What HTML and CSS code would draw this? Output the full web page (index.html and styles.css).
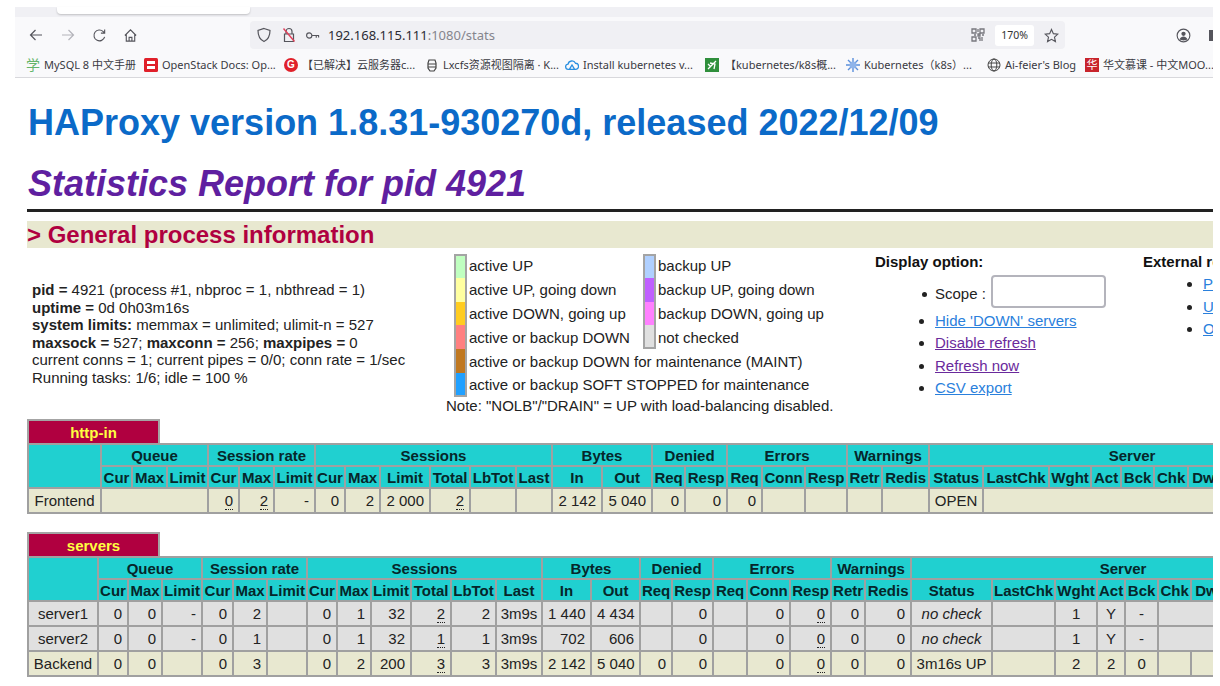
FILE: index.html
```html
<!DOCTYPE html>
<html lang="en">
<head>
<meta charset="utf-8">
<title>Statistics Report for HAProxy</title>
<link rel="stylesheet" href="styles.css">
</head>
<body>
<div class="shot">
  <div class="tabstrip"><div class="tab"></div></div>
  <div class="toolbar">
    <svg class="ic ic-back" viewBox="0 0 16 16"><path d="M14 8H2.500M7.500 3 2.500 8l5 5"/></svg>
    <svg class="ic ic-fwd" viewBox="0 0 16 16"><path d="M2 8h11.500M8.500 3l5 5-5 5"/></svg>
    <svg class="ic ic-reload" viewBox="0 0 16 16"><path d="M13.500 9.500A5.800 5.800 0 1 1 12 3.800L13.500 5.500M13.500 1.500v4h-4"/></svg>
    <svg class="ic ic-home" viewBox="0 0 16 16"><path d="M2 8 8 2l6 6M3.500 7v7h9V7M6.500 14v-4h3v4"/></svg>
    <div class="urlbar">
      <svg class="ic ic-shield" viewBox="0 0 16 16"><path d="M8 1.500 14 3.500c0 6-1.500 9-6 11-4.500-2-6-5-6-11z"/></svg>
      <svg class="ic ic-lock" viewBox="0 0 16 16"><path d="M5 7V4.500a3 3 0 0 1 6 0V7M3.500 7h9v7.500h-9z"/><path class="strike" d="M2.500 1.500l11 13"/></svg>
      <svg class="ic ic-key" viewBox="0 0 16 16"><circle cx="4.500" cy="8" r="2.800"/><path d="M7.500 8H15M12 8v2.500M14.500 8v2"/></svg>
      <span class="url">192.168.115.111<span class="url-rest">:1080/stats</span></span>
      <svg class="ic ic-qr" viewBox="0 0 14 14"><path d="M1 1h4v4H1zM9 1h4v4H9zM1 9h4v4H1zM7 1v3M7 6h2v2H7zM11 7h2M7 10h2v3M11 9v4M3 7h2"/></svg>
      <span class="zoom-chip">170%</span>
      <svg class="ic ic-star" viewBox="0 0 16 16"><path d="M8 1.500l2 4.500 4.800.5-3.600 3.200 1 4.800L8 12.100l-4.200 2.400 1-4.800L1.200 6.500 6 6z"/></svg>
    </div>
    <svg class="ic ic-account" viewBox="0 0 16 16"><circle cx="8" cy="8" r="6.800"/><circle class="solid" cx="8" cy="6.200" r="2.300"/><path class="solid" d="M3.800 12c1-2.200 2.500-3 4.200-3s3.200.8 4.200 3c-2.200 1.700-6.200 1.700-8.400 0z"/></svg>
    <span class="menu-edge"></span>
  </div>
  <div class="bookmarks">
    <div class="bm"><span class="fav fav-xue">学</span><span class="bm-text">MySQL 8 中文手册</span></div>
    <div class="bm"><svg class="fav" viewBox="0 0 14 14"><rect width="14" height="14" rx="1.500" fill="#e0202a"/><rect x="3" y="3" width="8" height="3" fill="#fff"/><rect x="3" y="8" width="8" height="3" fill="#fff"/></svg><span class="bm-text">OpenStack Docs: Op...</span></div>
    <div class="bm"><span class="fav fav-g">G</span><span class="bm-text">【已解决】云服务器c...</span></div>
    <div class="bm"><svg class="fav" viewBox="0 0 14 14"><path d="M4 2h6l1 3v5l-2 3H5l-2-3V5zM3 6h8M3 9h8" fill="none" stroke="#444" stroke-width="1.200"/></svg><span class="bm-text">Lxcfs资源视图隔离 · K...</span></div>
    <div class="bm"><svg class="fav" viewBox="0 0 16 14"><path d="M4 12a3 3 0 0 1-.5-6A4.500 4.500 0 0 1 12 5a3.500 3.500 0 0 1 0 7zM5 12l3-5 3 5" fill="none" stroke="#2a8fe0" stroke-width="1.500"/></svg><span class="bm-text">Install kubernetes v...</span></div>
    <div class="bm"><svg class="fav" viewBox="0 0 14 14"><rect width="14" height="14" fill="#2f8f3c"/><path d="M3 11 11 3M5 5l5 1-1 5M3 6l3 3" fill="none" stroke="#fff" stroke-width="1.300"/></svg><span class="bm-text bm-gap">【kubernetes/k8s概...</span></div>
    <div class="bm"><svg class="fav" viewBox="0 0 14 14"><path d="M7 0v14M0 7h14M2 2l10 10M12 2 2 12" stroke="#5a8fdc" stroke-width="1.400"/><circle cx="7" cy="7" r="3.500" fill="#8fb4ea"/></svg><span class="bm-text">Kubernetes（k8s）...</span></div>
    <div class="bm"><svg class="fav" viewBox="0 0 14 14"><circle cx="7" cy="7" r="6" fill="none" stroke="#444"/><ellipse cx="7" cy="7" rx="2.800" ry="6" fill="none" stroke="#444"/><path d="M1 5h12M1 9h12" stroke="#444"/></svg><span class="bm-text">Ai-feier's Blog</span></div>
    <div class="bm"><span class="fav fav-hua">华</span><span class="bm-text">华文慕课 - 中文MOO...</span></div>
  </div>

  <main class="page">
    <h1 class="title">HAProxy version 1.8.31-930270d, released 2022/12/09</h1>
    <h2 class="subtitle">Statistics Report for pid 4921</h2>
    <hr class="rule">
    <h3 class="band">&gt; General process information</h3>

    <section class="info">
      <p class="proc">
        <b>pid = </b>4921 (process #1, nbproc = 1, nbthread = 1)<br>
        <b>uptime = </b>0d 0h03m16s<br>
        <b>system limits:</b> memmax = unlimited; ulimit-n = 527<br>
        <b>maxsock = </b>527; <b>maxconn = </b>256; <b>maxpipes = </b>0<br>
        current conns = 1; current pipes = 0/0; conn rate = 1/sec<br>
        Running tasks: 1/6; idle = 100 %
      </p>
      <div class="legend">
        <span class="sw top c-up"></span><span class="lab">active UP</span>
        <span class="sw alt top c-bup"></span><span class="lab">backup UP</span>
        <span class="sw c-upd"></span><span class="lab">active UP, going down</span>
        <span class="sw alt c-bupd"></span><span class="lab">backup UP, going down</span>
        <span class="sw c-dnu"></span><span class="lab">active DOWN, going up</span>
        <span class="sw alt c-bdnu"></span><span class="lab">backup DOWN, going up</span>
        <span class="sw c-dn"></span><span class="lab">active or backup DOWN</span>
        <span class="sw alt end c-nc"></span><span class="lab">not checked</span>
        <span class="sw c-mnt"></span><span class="lab lab-wide">active or backup DOWN for maintenance (MAINT)</span>
        <span class="sw end c-soft"></span><span class="lab lab-wide">active or backup SOFT STOPPED for maintenance</span>
        <span class="note">Note: "NOLB"/"DRAIN" = UP with load-balancing disabled.</span>
      </div>
      <div class="opts">
        <b class="opt-title">Display option:</b>
        <ul class="opt-list">
          <li class="scope">Scope : <input class="scope-input" type="text"></li>
          <li><a class="lnk" href="#">Hide 'DOWN' servers</a></li>
          <li><a class="lnk seen" href="#">Disable refresh</a></li>
          <li><a class="lnk seen" href="#">Refresh now</a></li>
          <li><a class="lnk" href="#">CSV export</a></li>
        </ul>
      </div>
      <div class="ext">
        <b class="opt-title">External resources:</b>
        <ul class="ext-list">
          <li><a class="lnk" href="#">Primary site</a></li>
          <li><a class="lnk" href="#">Updates (v1.8)</a></li>
          <li><a class="lnk" href="#">Online manual</a></li>
        </ul>
      </div>
    </section>

    <div class="pxname">http-in</div>
    <table class="tbl t1">
      <colgroup><col><col><col><col><col><col><col><col><col><col><col><col><col><col><col><col><col><col><col><col><col><col><col><col><col><col><col><col><col><col><col></colgroup>
      <tr class="r1"><th rowspan="2"></th><th colspan="3">Queue</th><th colspan="3">Session rate</th><th colspan="6">Sessions</th><th colspan="2">Bytes</th><th colspan="2">Denied</th><th colspan="3">Errors</th><th colspan="2">Warnings</th><th colspan="9">Server</th></tr>
      <tr class="r2"><th>Cur</th><th>Max</th><th>Limit</th><th>Cur</th><th>Max</th><th>Limit</th><th>Cur</th><th>Max</th><th>Limit</th><th>Total</th><th>LbTot</th><th>Last</th><th>In</th><th>Out</th><th>Req</th><th>Resp</th><th>Req</th><th>Conn</th><th>Resp</th><th>Retr</th><th>Redis</th><th>Status</th><th>LastChk</th><th>Wght</th><th>Act</th><th>Bck</th><th>Chk</th><th>Dwn</th><th>Dwntme</th><th>Thrtle</th></tr>
      <tr class="r3 cream"><td class="ctr">Frontend</td><td colspan="3"></td><td><u>0</u></td><td><u>2</u></td><td>-</td><td>0</td><td>2</td><td>2 000</td><td><u>2</u></td><td></td><td></td><td>2 142</td><td>5 040</td><td>0</td><td>0</td><td>0</td><td></td><td></td><td></td><td></td><td class="ctr">OPEN</td><td colspan="8"></td></tr>
    </table>

    <div class="pxname second">servers</div>
    <table class="tbl t2">
      <colgroup><col><col><col><col><col><col><col><col><col><col><col><col><col><col><col><col><col><col><col><col><col><col><col><col><col><col><col><col><col><col><col></colgroup>
      <tr class="r1"><th rowspan="2"></th><th colspan="3">Queue</th><th colspan="3">Session rate</th><th colspan="6">Sessions</th><th colspan="2">Bytes</th><th colspan="2">Denied</th><th colspan="3">Errors</th><th colspan="2">Warnings</th><th colspan="9">Server</th></tr>
      <tr class="r2"><th>Cur</th><th>Max</th><th>Limit</th><th>Cur</th><th>Max</th><th>Limit</th><th>Cur</th><th>Max</th><th>Limit</th><th>Total</th><th>LbTot</th><th>Last</th><th>In</th><th>Out</th><th>Req</th><th>Resp</th><th>Req</th><th>Conn</th><th>Resp</th><th>Retr</th><th>Redis</th><th>Status</th><th>LastChk</th><th>Wght</th><th>Act</th><th>Bck</th><th>Chk</th><th>Dwn</th><th>Dwntme</th><th>Thrtle</th></tr>
      <tr class="r3 grey"><td class="ctr">server1</td><td>0</td><td>0</td><td>-</td><td>0</td><td>2</td><td></td><td>0</td><td>1</td><td>32</td><td><u>2</u></td><td>2</td><td class="ctr">3m9s</td><td>1 440</td><td>4 434</td><td></td><td>0</td><td></td><td>0</td><td><u>0</u></td><td>0</td><td>0</td><td class="ctr it">no check</td><td></td><td class="ctr">1</td><td class="ctr">Y</td><td class="ctr">-</td><td colspan="4"></td></tr>
      <tr class="r3 grey"><td class="ctr">server2</td><td>0</td><td>0</td><td>-</td><td>0</td><td>1</td><td></td><td>0</td><td>1</td><td>32</td><td><u>1</u></td><td>1</td><td class="ctr">3m9s</td><td>702</td><td>606</td><td></td><td>0</td><td></td><td>0</td><td><u>0</u></td><td>0</td><td>0</td><td class="ctr it">no check</td><td></td><td class="ctr">1</td><td class="ctr">Y</td><td class="ctr">-</td><td colspan="4"></td></tr>
      <tr class="r3 cream"><td class="ctr">Backend</td><td>0</td><td>0</td><td></td><td>0</td><td>3</td><td></td><td>0</td><td>2</td><td>200</td><td><u>3</u></td><td>3</td><td class="ctr">3m9s</td><td>2 142</td><td>5 040</td><td>0</td><td>0</td><td></td><td>0</td><td><u>0</u></td><td>0</td><td>0</td><td class="ctr">3m16s UP</td><td></td><td class="ctr">2</td><td class="ctr">2</td><td class="ctr">0</td><td></td><td></td><td></td><td></td></tr>
    </table>
  </main>
</div>
</body>
</html>
```
FILE: styles.css
```css
* { box-sizing: border-box; }
html, body { margin: 0; padding: 0; background: #fff; }
body { font-family: "Liberation Sans", Arial, sans-serif; color: #222; }

.shot { width: 1198px; height: 686px; margin-left: 15px; padding-top: 7px; overflow: hidden; }

/* browser chrome */
.tabstrip { height: 10px; background: #f0f0f4; padding-left: 42px; }
.tab { width: 193px; height: 7px; background: #fff; border-radius: 0 0 4px 4px; box-shadow: 0 1px 2px rgba(0,0,0,.2); }
.toolbar { height: 33px; padding-top: 3px; background: #f9f9fb; display: flex; align-items: center; position: relative; }
.ic { fill: none; stroke: #55555c; stroke-width: 1.2; display: block; flex: none; }
.ic .solid { fill: #55555c; stroke: none; }
.ic .strike { stroke: #e0405a; stroke-width: 1.4; }
.ic-back { width: 16px; height: 16px; margin-left: 13px; }
.ic-fwd { width: 16px; height: 16px; margin-left: 16px; stroke: #b4b4ba; }
.ic-reload { width: 15px; height: 15px; margin-left: 16px; }
.ic-home { width: 15px; height: 15px; margin-left: 16px; }
.urlbar { width: 815px; height: 28px; margin-left: 112px; background: #f0f0f4; border-radius: 4px; display: flex; align-items: center; }
.ic-shield { width: 16px; height: 16px; margin-left: 6px; }
.ic-lock { width: 16px; height: 16px; margin-left: 9px; }
.ic-key { width: 15px; height: 15px; margin-left: 8px; }
.url { font: 13px "Noto Sans", sans-serif; color: #2b2b33; margin-left: 8px; flex: 1; white-space: nowrap; }
.url-rest { color: #85858d; }
.ic-qr { width: 14px; height: 14px; stroke: #77777d; stroke-width: 1.3; }
.zoom-chip { width: 39px; height: 21px; margin-left: 10px; background: #fff; border-radius: 3px; font: 10.5px/21px "Noto Sans", sans-serif; color: #333; text-align: center; }
.ic-star { width: 15px; height: 15px; margin: 0 6px 0 10px; }
.ic-account { width: 15px; height: 15px; margin-left: 111px; }
.menu-edge { position: absolute; right: 0; top: 13px; width: 4px; height: 11px; background: #55555c; }

.bookmarks { height: 28px; padding: 2px 0 0 11px; background: #f9f9fb; border-bottom: 1px solid #d8d8dc; display: grid; grid-template-columns: 118px 140px 141px 140px 140px 141px 141px 98px 128px; align-items: center; }
.bm { display: flex; align-items: center; min-width: 0; font: 11px/16px "Noto Sans", "Noto Sans CJK SC", sans-serif; color: #3a3a42; white-space: nowrap; }
.fav { width: 14px; height: 14px; flex: none; display: block; margin-right: 4px; text-align: center; font-size: 12px; line-height: 14px; }
.fav-xue { color: #63b56b; font-size: 14px; }
.fav-g { background: #e0202a; color: #fff; border-radius: 50%; font: bold 10px/14px "Liberation Sans", sans-serif; }
.fav-hua { background: #c8242c; color: #fff; font-size: 11px; }
.bm-text { display: block; }
.bm-gap { margin-left: 2px; }

/* page */
.page { padding-left: 12px; }
.title { margin: 25px 0 0 1px; font-size: 36px; line-height: 40px; font-weight: bold; color: #0b6ac8; white-space: nowrap; }
.subtitle { margin: 21px 0 0 1px; font-size: 36px; line-height: 40px; font-weight: bold; font-style: italic; color: #5f1fa0; white-space: nowrap; }
.rule { margin: 5px 0 0; height: 3px; background: #222; border: 0; width: 1300px; }
.band { margin: 9px 0 0; width: 1300px; height: 27px; background: #e8e8d0; color: #b00040; font-size: 24px; line-height: 27px; font-weight: bold; }

.info { display: grid; grid-template-columns: 419px 429px 268px 300px; font-size: 15px; height: 171px; width: 1416px; }
.proc { margin: 33px 0 0 5px; line-height: 17.6px; white-space: nowrap; }
.legend { padding-top: 6px; display: grid; grid-template-columns: 8px 13px 176px 13px 1fr; grid-auto-rows: 23.8px; align-items: center; align-content: start; white-space: nowrap; }
.sw { grid-column: 2; height: 100%; border-left: 2px solid #a4a4a4; border-right: 2px solid #a4a4a4; }
.sw.alt { grid-column: 4; }
.sw.top { border-top: 2px solid #a4a4a4; }
.sw.end { border-bottom: 2px solid #a4a4a4; }
.lab { padding-left: 2px; }
.lab-wide { grid-column: 3 / -1; }
.c-up { background: #c0ffc0; }
.c-upd { background: #ffffa0; }
.c-dnu { background: #ffcc20; }
.c-dn { background: #ff8080; }
.c-mnt { background: #c07820; }
.c-soft { background: #20a0ff; }
.c-bup { background: #b0d0ff; }
.c-bupd { background: #c060ff; }
.c-bdnu { background: #ff80ff; }
.c-nc { background: #e0e0e0; }
.note { grid-column: 1 / -1; align-self: start; line-height: 18px; }

.opts, .ext { padding-top: 5px; white-space: nowrap; }
.opt-title { display: block; line-height: 18px; color: #111; }
.opt-list { list-style: disc; margin: 2px 0 0; padding: 0 0 0 60px; line-height: 22.4px; }
.scope { height: 37px; padding-bottom: 5px; display: flex; align-items: flex-end; position: relative; white-space: pre; }
.scope::before { content: ""; position: absolute; left: -13px; top: 19px; width: 5px; height: 5px; border-radius: 50%; background: #222; }
.scope-input { width: 115px; height: 33px; margin: 2px 0 0 1px; align-self: flex-start; border: 2px solid #b4b4bc; border-radius: 4px; background: #fff; }
.ext-list { list-style: disc; margin: 2px 0 0; padding: 0 0 0 60px; line-height: 22.5px; }
.lnk { color: #2a80dc; text-decoration: underline; }
.lnk.seen { color: #6a2a9c; }

.pxname { width: 133px; height: 24px; background: #b00040; color: #ffff40; font-size: 15px; font-weight: bold; line-height: 24px; text-align: center; border: 2px solid #a4a4a4; border-bottom: 0; }
.pxname.second { margin-top: 18px; }

.tbl { border-collapse: collapse; table-layout: fixed; font-size: 15px; color: #222; }
.t1 { width: 1307px; }
.t2 { width: 1307px; }
.tbl th, .tbl td { border: 2px solid #a0a0a0; white-space: nowrap; overflow: hidden; }
.tbl th { background: #20d0d0; color: #06262a; font-weight: bold; padding: 0; text-align: center; }
.tbl td { padding: 0 5px; text-align: right; }
.tbl td.ctr { text-align: center; padding: 0; }
.tbl td.it { font-style: italic; }
.tbl u { text-decoration: none; border-bottom: 1px dotted #222; }
.r1 { height: 22px; }
.r2 { height: 22px; }
.r3 { height: 25px; }
.cream td { background: #e8e8d0; }
.grey td { background: #e0e0e0; }

.t1 col:nth-child(1) { width: 73px; }
.t1 col:nth-child(2) { width: 31px; }
.t1 col:nth-child(3) { width: 35px; }
.t1 col:nth-child(4) { width: 41px; }
.t1 col:nth-child(5) { width: 31px; }
.t1 col:nth-child(6) { width: 35px; }
.t1 col:nth-child(7) { width: 41px; }
.t1 col:nth-child(8) { width: 30px; }
.t1 col:nth-child(9) { width: 35px; }
.t1 col:nth-child(10) { width: 50px; }
.t1 col:nth-child(11) { width: 40px; }
.t1 col:nth-child(12) { width: 46px; }
.t1 col:nth-child(13) { width: 36px; }
.t1 col:nth-child(14) { width: 50px; }
.t1 col:nth-child(15) { width: 50px; }
.t1 col:nth-child(16) { width: 33px; }
.t1 col:nth-child(17) { width: 42px; }
.t1 col:nth-child(18) { width: 35px; }
.t1 col:nth-child(19) { width: 43px; }
.t1 col:nth-child(20) { width: 42px; }
.t1 col:nth-child(21) { width: 35px; }
.t1 col:nth-child(22) { width: 47px; }
.t1 col:nth-child(23) { width: 54px; }
.t1 col:nth-child(24) { width: 66px; }
.t1 col:nth-child(25) { width: 42px; }
.t1 col:nth-child(26) { width: 30px; }
.t1 col:nth-child(27) { width: 33px; }
.t1 col:nth-child(28) { width: 34px; }
.t1 col:nth-child(29) { width: 40px; }
.t1 col:nth-child(30) { width: 55px; }
.t1 col:nth-child(31) { width: 52px; }

.t2 col:nth-child(1) { width: 70px; }
.t2 col:nth-child(2) { width: 30px; }
.t2 col:nth-child(3) { width: 34px; }
.t2 col:nth-child(4) { width: 40px; }
.t2 col:nth-child(5) { width: 31px; }
.t2 col:nth-child(6) { width: 34px; }
.t2 col:nth-child(7) { width: 40px; }
.t2 col:nth-child(8) { width: 30px; }
.t2 col:nth-child(9) { width: 34px; }
.t2 col:nth-child(10) { width: 40px; }
.t2 col:nth-child(11) { width: 40px; }
.t2 col:nth-child(12) { width: 45px; }
.t2 col:nth-child(13) { width: 46px; }
.t2 col:nth-child(14) { width: 49px; }
.t2 col:nth-child(15) { width: 49px; }
.t2 col:nth-child(16) { width: 32px; }
.t2 col:nth-child(17) { width: 41px; }
.t2 col:nth-child(18) { width: 34px; }
.t2 col:nth-child(19) { width: 43px; }
.t2 col:nth-child(20) { width: 41px; }
.t2 col:nth-child(21) { width: 34px; }
.t2 col:nth-child(22) { width: 46px; }
.t2 col:nth-child(23) { width: 81px; }
.t2 col:nth-child(24) { width: 63px; }
.t2 col:nth-child(25) { width: 42px; }
.t2 col:nth-child(26) { width: 28px; }
.t2 col:nth-child(27) { width: 33px; }
.t2 col:nth-child(28) { width: 33px; }
.t2 col:nth-child(29) { width: 40px; }
.t2 col:nth-child(30) { width: 52px; }
.t2 col:nth-child(31) { width: 52px; }
```
